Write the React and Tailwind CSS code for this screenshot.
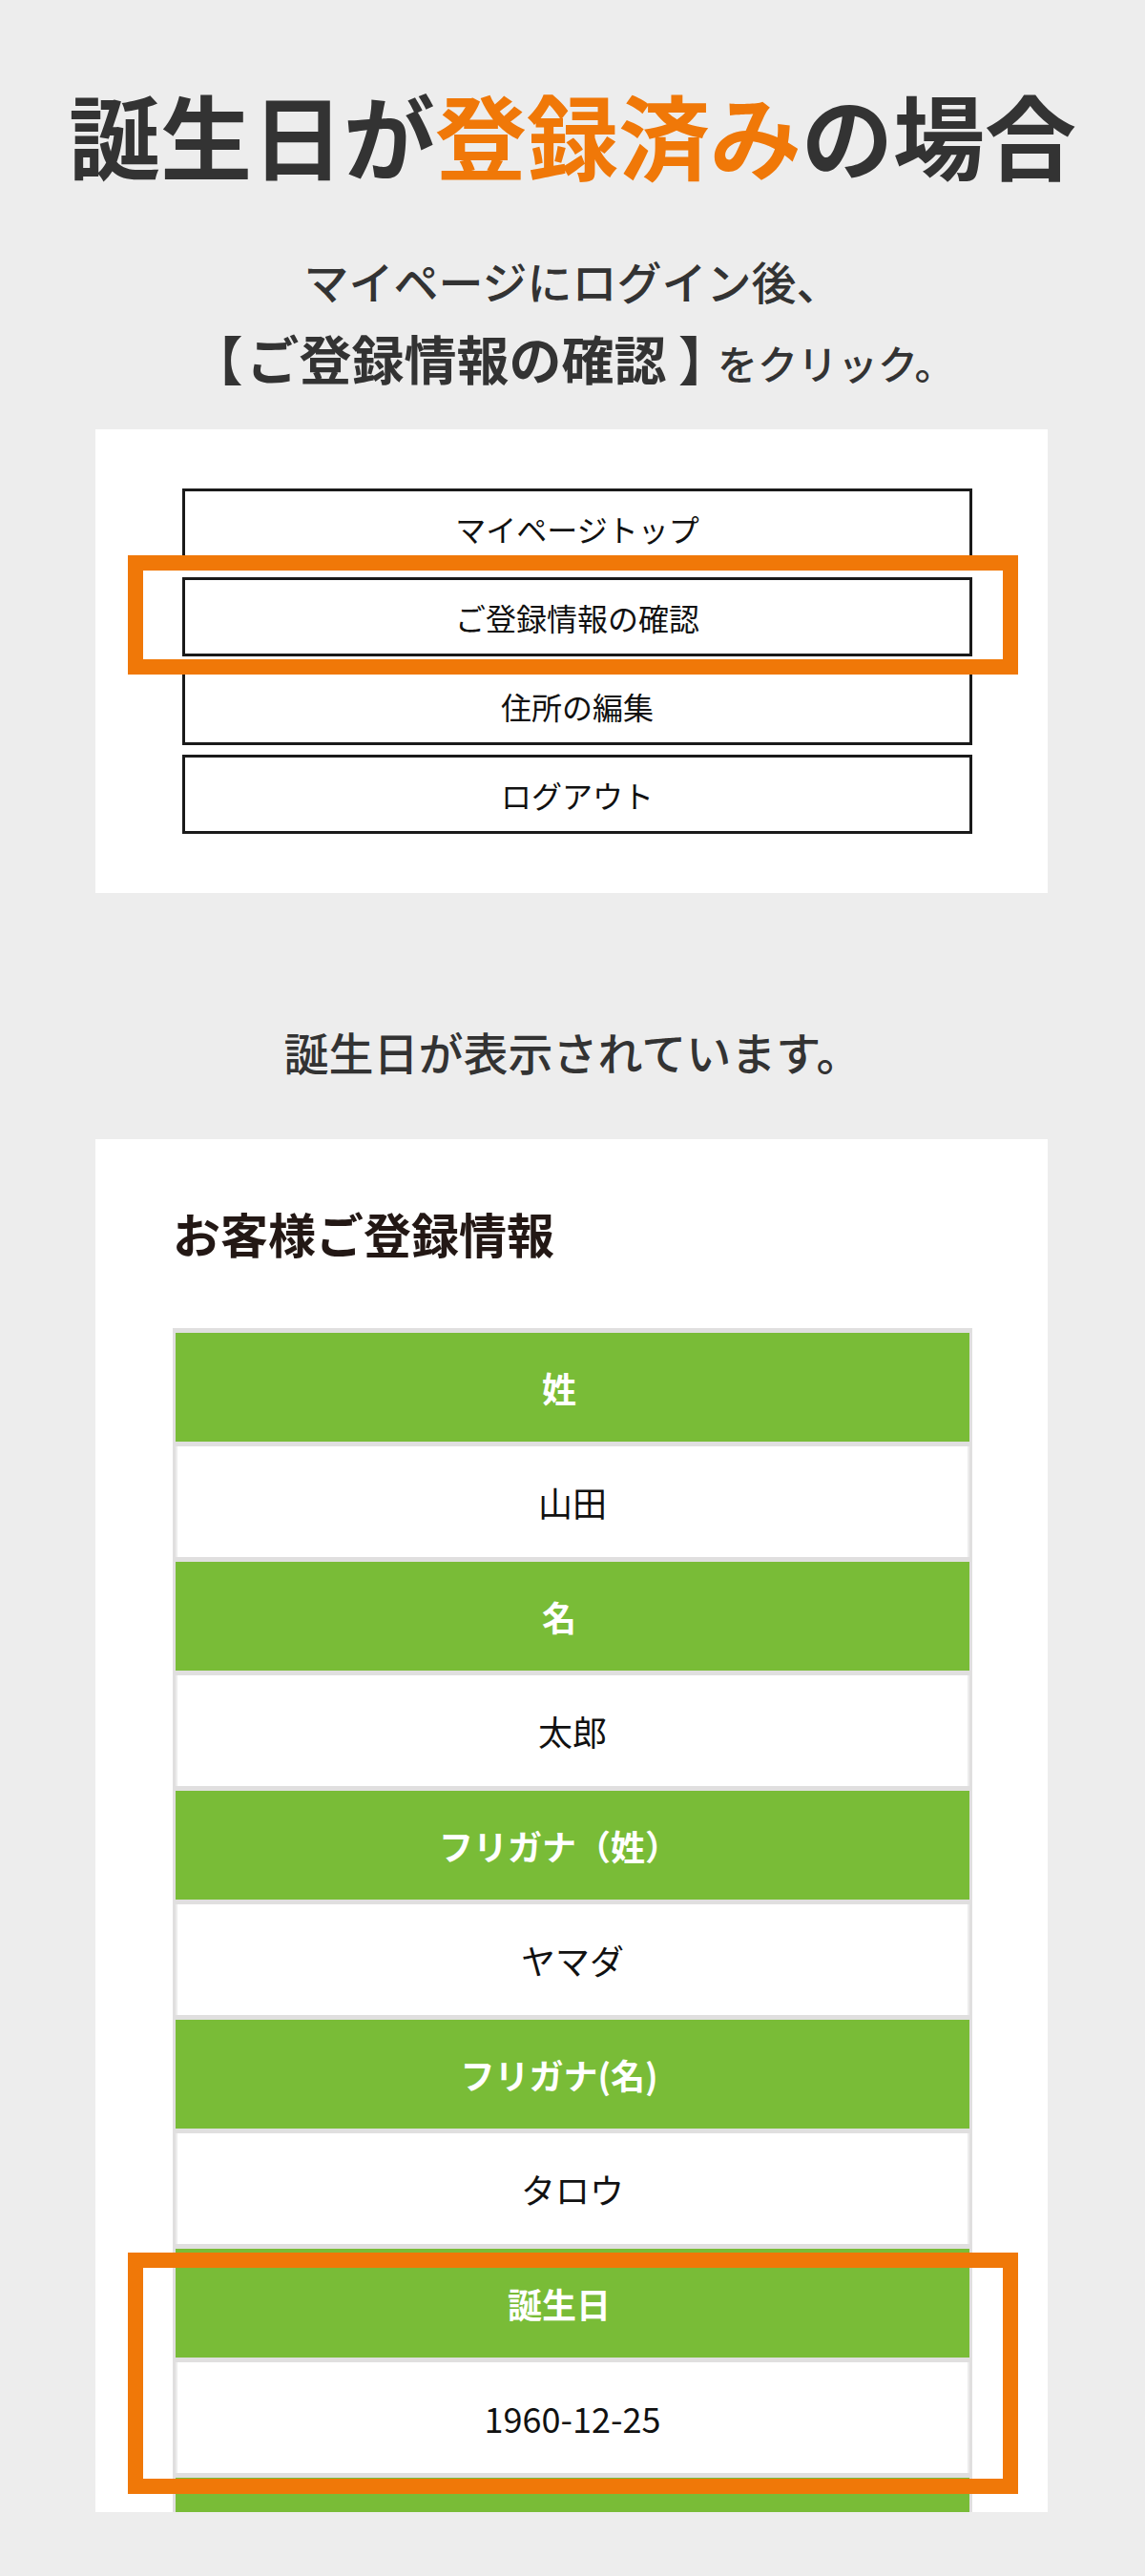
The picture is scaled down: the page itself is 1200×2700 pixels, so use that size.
import React from 'react';

const menu = ['マイページトップ', 'ご登録情報の確認', '住所の編集', 'ログアウト'];

const rows = [
  ['姓', '山田'],
  ['名', '太郎'],
  ['フリガナ（姓）', 'ヤマダ'],
  ['フリガナ(名)', 'タロウ'],
  ['誕生日', '1960-12-25'],
  ['', ''], // next row, cut off by the card edge
];

const App = () => {
  return (
    <div className="min-h-[2700px] bg-[#ededed] pt-[92px] pb-[68px] font-['Noto_Sans_CJK_JP','Noto_Sans_CJK_SC',sans-serif] text-[#333]">
      <h1 className="text-center text-[96px] font-bold leading-none">
        誕生日が<span className="text-[#f07808]">登録済み</span>の場合
      </h1>

      <p className="mt-[65px] text-center text-[47px] font-medium leading-[81px]">
        マイページにログイン後、
        <br />
        <span className="text-[55px] font-bold">【</span>
        <span className="ml-[4px] text-[55px] font-bold">ご登録情報の確認</span>
        <span className="ml-[14px] text-[55px] font-bold [font-feature-settings:'palt']">】</span>
        <span className="ml-[12px] text-[42px]">をクリック。</span>
      </p>

      {/* mypage menu */}
      <section className="relative ml-[100px] mt-[30px] w-[998px] bg-white pl-[91px] pr-[79px] py-[62px]">
        <div className="flex flex-col gap-[10px]">
          {menu.map((label) => (
            <div
              key={label}
              className="flex h-[83px] items-center justify-center border-[3px] border-[#1a1a1a] text-[32px] leading-none text-[#111]"
            >
              {label}
            </div>
          ))}
        </div>
        <div className="absolute left-[34px] top-[132px] h-[125px] w-[933px] border-[16px] border-[#f07808]"></div>
      </section>

      <p className="mt-[131px] text-center text-[47px] font-medium leading-[69px]">
        誕生日が表示されています。
      </p>

      {/* registered info */}
      <section className="relative ml-[100px] mt-[58px] h-[1439px] w-[998px] overflow-hidden bg-white pl-[81px] pr-[79px] pt-[73px]">
        <h2 className="text-[50px] font-bold leading-none text-[#231815]">お客様ご登録情報</h2>
        <div className="mt-[75px] flex flex-col gap-[5px] border-x-[3px] border-t-[5px] border-[#e0dfdf] bg-[#e0dfdf]">
          {rows.map(([label, value], i) => (
            <React.Fragment key={i}>
              <div className="flex h-[114px] items-center justify-center bg-[#79bc37] pr-[28px] text-[36px] font-bold leading-none text-white">
                {label}
              </div>
              <div className="flex h-[116px] items-center justify-center border-x-2 border-[#ececec] bg-white text-[36px] leading-none text-[#111]">
                {value}
              </div>
            </React.Fragment>
          ))}
        </div>
        <div className="absolute left-[34px] top-[1167px] h-[253px] w-[933px] border-[16px] border-[#f07808]"></div>
      </section>
    </div>
  );
};

export default App;
